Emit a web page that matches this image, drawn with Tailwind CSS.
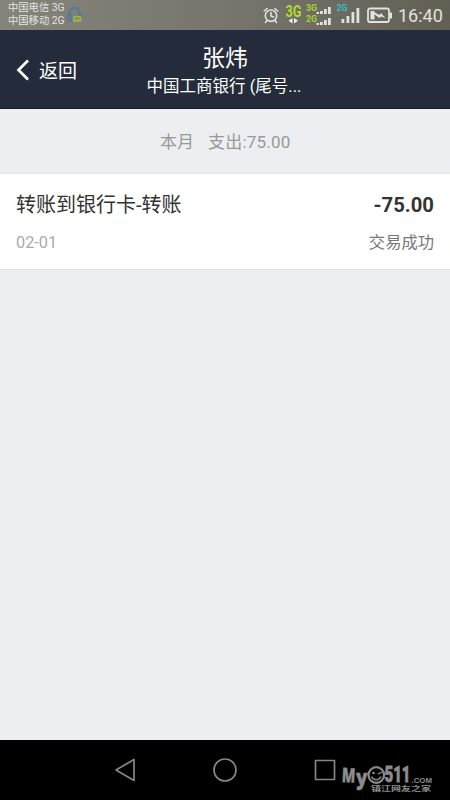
<!DOCTYPE html>
<html lang="zh-CN">
<head>
<meta charset="utf-8">
<title>张炜</title>
<script src="https://cdn.jsdelivr.net/npm/@tailwindcss/browser@4"></script>
</head>
<body class="w-[450px] h-[800px] overflow-hidden flex flex-col bg-[#eceef1] font-[Roboto,'Noto_Sans_CJK_SC',sans-serif]">
<div class="h-[30px] shrink-0 flex bg-linear-to-r from-[#85847b] via-[#77756e] to-[#625f54]">
  <div class="w-[64px] pl-[8px] pt-[1px] text-[10.3px] leading-[13px] text-[#e4e4e0] whitespace-nowrap">
    <div>中国电信 3G</div>
    <div>中国移动 2G</div>
  </div>
  <svg class="w-[22px] h-[30px]" viewBox="64 0 22 30" fill="none">
    <path d="M69.500 15v-2c0-7 10-7 10 0v3M69.500 14.500c-2.500 0-2.500 6.500 .5 6.500h1v-6.500h-1.500M79.500 14c1.500 0 2 1.500 1.500 3" stroke="#4179ab" stroke-width="1.400"/>
    <rect x="73" y="16" width="8.500" height="6" rx="1" fill="#99ae4b"/><path d="M75 18.500h4.500" stroke="#6b835b"/>
  </svg>
  <svg class="w-[140px] h-[30px] ml-auto" viewBox="260 0 140 30" fill="none" font-family="Roboto">
    <g stroke="#e4e2dc" stroke-width="1.6" stroke-linecap="round">
      <circle cx="271" cy="15.700" r="5.700"/><path d="M271 12.500v3.500l2.500 1M264.200 11l3-2.500M277.800 11l-3-2.500M267 20.500l-1.500 2M275 20.500l1.500 2"/>
    </g>
    <text x="285.500" y="16.500" font-size="16" font-weight="700" fill="#b0dc28" textLength="16" lengthAdjust="spacingAndGlyphs">3G</text>
    <path d="M292.500 18v5.500l-4-2.750zM294 18v5.500l4-2.750z" fill="#eee"/>
    <g font-size="9" font-weight="700" fill="#a5d52e"><text x="306" y="10.500" textLength="11" lengthAdjust="spacingAndGlyphs">3G</text><text x="306" y="21.800" textLength="11" lengthAdjust="spacingAndGlyphs">2G</text></g>
    <path d="M316.500 14v-2h2.500v2zM320 14v-3h2.800v3zM324 14V9h2.800v5zM328 14V7h2.800v7zM316.500 25v-2h2.500v2zM320 25v-3h2.800v3zM324 25v-5h2.800v5zM328 25v-7h2.800v7z" fill="#e4e2dc"/>
    <text x="336.500" y="10.500" font-size="9.500" font-weight="700" fill="#2fc0c5" textLength="11" lengthAdjust="spacingAndGlyphs">2G</text>
    <path d="M341.500 23v-4h2.800v4zM346.500 23v-7h2.800v7zM351.500 23V12h2.800v11zM356.500 23V8h2.800v15z" fill="#e4e2dc"/>
    <rect x="368" y="8.500" width="21" height="13.500" rx="2" stroke="#e4e2dc" stroke-width="1.800"/>
    <path d="M389.500 12.500h2.500v6h-2.500zM370.500 11h4v8.500h-4z" fill="#e4e2dc"/>
    <path d="M374 12l5.500 3 1.500-2 4.500 5-4.500-1.500-1.500 1.500-5.500-4z" fill="#e4e2dc"/>
  </svg>
  <div class="w-[50px] pt-[2px] text-[18px] leading-[28px] text-[#e4e2dc]"><span class="-ml-[2px]">16:40</span></div>
</div>
<header class="h-[79px] shrink-0 grid grid-cols-[140px_170px_140px] bg-[#242c3b] border-b border-[#151d2b] text-white">
  <div class="flex items-center pl-[14px] pt-[1px]">
    <svg class="w-[16px] h-[24px]" viewBox="0 0 16 24" fill="none"><path d="M14 2.500L4.500 12l9.500 9.500" stroke="white" stroke-width="2.700"/></svg>
    <span class="ml-[9px] pt-[4px] text-[19px] leading-[24px]">返回</span>
  </div>
  <div class="text-center whitespace-nowrap">
    <div class="pt-[14px] text-[23px] leading-[30px]">张炜</div>
    <div class="text-[16.500px] leading-[25px] -ml-[2px]">中国工商银行 (尾号...</div>
  </div>
</header>
<div class="h-[65px] shrink-0 pl-[160px] pt-[1px] text-[17px] leading-[65px] text-[#999] whitespace-nowrap border-b border-[#e2e5e6]">本月<span class="ml-[14px] tracking-[.2px]">支出:75.00</span></div>
<div class="h-[96px] shrink-0 bg-white border-b border-[#dde1e1] px-[16px] pt-[16px]">
  <div class="flex justify-between text-[20px] leading-[31px] text-[#333]"><span>转账到银行卡-转账</span><span class="font-bold text-[20.300px] leading-[30px]">-75.00</span></div>
  <div class="flex justify-between mt-[9px] text-[16.300px] leading-[26px]"><span class="text-[#aaa]">02-01</span><span class="text-[#777]">交易成功</span></div>
</div>
<main class="flex-1"></main>
<nav class="h-[60px] shrink-0 bg-black">
  <svg class="w-[450px] h-[60px]" viewBox="0 740 450 60" fill="none">
    <g stroke="#858585" stroke-width="1.700" stroke-linejoin="round">
      <path d="M116 770l18-10.500v21z"/><circle cx="225" cy="770" r="11"/><rect x="315.500" y="760.500" width="19" height="19"/>
    </g>
    <g fill="#8c8c8c">
      <g font-family="Open Sans" font-weight="800" stroke="#8c8c8c" stroke-width=".4">
        <text x="342" y="782.500" font-size="20" textLength="13.500" lengthAdjust="spacingAndGlyphs" transform="rotate(3 349 775)">M</text>
        <text x="356" y="784.500" font-size="21" textLength="11.500" lengthAdjust="spacingAndGlyphs">y</text>
      </g>
      <text x="384.500" y="782" font-family="Roboto" font-weight="900" font-size="22.500" stroke="#8c8c8c" stroke-width=".8" textLength="26" lengthAdjust="spacingAndGlyphs">511</text>
      <text x="411.500" y="782.500" font-family="Liberation Sans" font-weight="700" font-size="8" textLength="20.500" lengthAdjust="spacingAndGlyphs">.COM</text>
      <text x="371" y="790.800" font-family="Noto Sans CJK SC" font-weight="700" font-size="7" textLength="60" lengthAdjust="spacingAndGlyphs">镇江网友之家</text>
      <circle cx="373.500" cy="773" r="1.300"/><path d="M377.500 773.500l4-2 .5 1.200-4 2z"/>
    </g>
    <ellipse cx="376.300" cy="775" rx="7.800" ry="7.800" stroke="#8c8c8c" stroke-width="2.200"/>
    <path d="M371.500 776.500c2 4.500 7.500 4.500 9.500 0" stroke="#8c8c8c" stroke-width="1.400"/>
  </svg>
</nav>
</body>
</html>
